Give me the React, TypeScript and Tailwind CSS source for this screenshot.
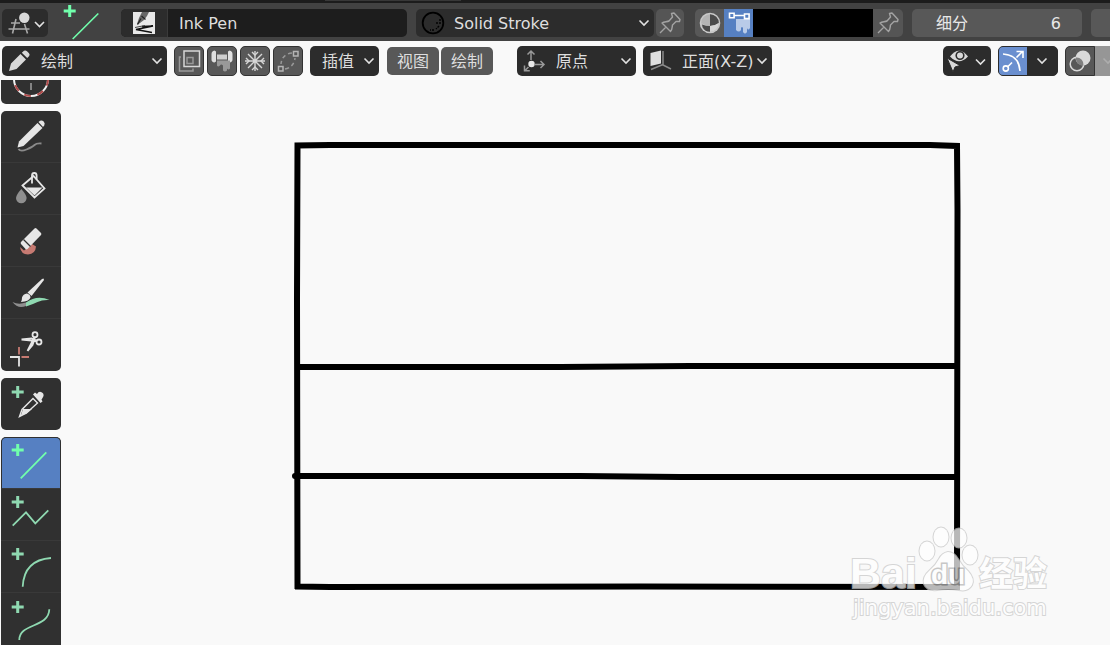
import type { ReactNode } from 'react';

const FONT = "font-['DejaVu_Sans','Noto_Sans_CJK_SC',sans-serif]";

function Chevron({ className = '' }: { className?: string }) {
  return (
    <svg
      className={`pointer-events-none shrink-0 ${className}`}
      width="12"
      height="8"
      viewBox="0 0 12 8"
      fill="none"
      stroke="#e2e2e2"
      strokeWidth="1.6"
    >
      <path d="M1.5 1.5 6 6l4.5-4.5" />
    </svg>
  );
}

function Plus() {
  return <path d="M16.7 7v12M10.7 13h12" strokeWidth="3" />;
}

function PinIcon() {
  return (
    <svg width="28" height="28" viewBox="0 0 28 28" fill="none" stroke="#a3a3a3" strokeWidth="1.4" strokeLinejoin="round">
      <path d="M4 24 10 18M6 14C8 12.500 11 13 13 12L16.500 8 15.500 4.500 18 4 24 10.500 23.500 12.500 20 12.500 16.500 16C16 18 16.500 20.500 14.500 22.500Z" />
    </svg>
  );
}

function Dropdown({
  label,
  value,
  icon,
  className,
}: {
  label: string;
  value: string;
  icon?: ReactNode;
  className: string;
}) {
  return (
    <div className="relative flex shrink-0 items-center">
      {icon && <span className="pointer-events-none absolute left-0">{icon}</span>}
      <select
        aria-label={label}
        defaultValue={value}
        className={`appearance-none rounded-[5px] bg-[#2c2c2c] pt-0.5 text-base text-[#dedede] outline-none ${className}`}
      >
        <option>{value}</option>
      </select>
      <Chevron className="absolute right-1" />
    </div>
  );
}

function IconButton({ label, className = '', children }: { label: string; className?: string; children: ReactNode }) {
  return (
    <button
      aria-label={label}
      className={`flex shrink-0 items-center justify-center overflow-hidden ${className}`}
    >
      {children}
    </button>
  );
}

const tile = 'h-[30px] w-[30px] rounded-[5px] border border-[#333] bg-[#585858]';

function ToolSettings() {
  return (
    <div className="flex h-[38px] items-center overflow-hidden bg-[#424242] pt-0.5 pl-0.5">
      <IconButton label="Snap" className="h-7 w-[46px] rounded-[5px] bg-[#2c2c2c]">
        <svg width="46" height="28" viewBox="0 0 46 28" fill="none" stroke="#a8a8a8" strokeWidth="1.6">
          <path d="M14 10 10.500 24.500M22.500 15 25.500 24.500M9 14h9M6.500 20h21" />
          <circle cx="22.300" cy="8.700" r="5.200" fill="#d9d9d9" stroke="none" />
          <path d="M33 13l4.500 4.500 4.500-4.500" stroke="#e2e2e2" />
        </svg>
      </IconButton>

      <svg className="ml-[10px] shrink-0" width="60" height="36" viewBox="0 1 60 36" fill="none" stroke="#71ffac">
        <path d="M11.700 1v12M5.700 7h12" strokeWidth="3" />
        <path d="M14.700 35 40.300 9.500" strokeWidth="1.600" />
      </svg>

      <div className="ml-[3px] flex h-7 shrink-0 overflow-hidden rounded-[5px] bg-[#1d1d1d]">
        <IconButton label="Brush preset" className="w-[47px] border-r border-[#3a3a3a] bg-[#2c2c2c]">
          <svg width="22" height="22" viewBox="0 0 22 22">
            <path d="M0 0h22v22H0z" fill="#e8e8e8" />
            <path d="M9 0h7l-2 4-3 4-6 4.500-1-.5 2-6z" fill="#666" />
            <path d="M4.500 12.500 8 6.500M8.500 4l4 3.500" stroke="#222" strokeWidth="1.200" />
            <path d="M9 14.500 20 14 3 17.500 19 20.500" fill="none" stroke="#111" strokeWidth="1.400" />
            <path d="M2 15.500 12 13.500" stroke="#444" />
          </svg>
        </IconButton>
        <input
          aria-label="Brush name"
          defaultValue="Ink Pen"
          className="w-[239px] bg-transparent pt-0.5 pl-[11px] text-base text-[#dedede] outline-none"
        />
      </div>

      <div className="ml-[9px] flex">
        <Dropdown
          label="Material"
          value="Solid Stroke"
          className="h-7 w-[238px] pl-[38px]"
          icon={
            <svg width="34" height="28" viewBox="0 0 34 28" fill="none" stroke="#000">
              <circle cx="17" cy="14" r="10.300" strokeWidth="1.800" />
              <path d="M24 10v5M23 17l-3 3M18 21h-4M21 13v3" strokeWidth="1.400" strokeDasharray="2 1" />
            </svg>
          }
        />
      </div>
      <IconButton label="Pin material" className="ml-0.5 h-7 w-7 rounded-[5px] bg-[#555]">
        <PinIcon />
      </IconButton>

      <div className="ml-[11px] flex h-7 shrink-0 overflow-hidden rounded-[5px]">
        <IconButton label="Material colour" className="w-[29px] bg-[#585858]">
          <svg width="28" height="28" viewBox="0 0 28 28">
            <circle cx="14" cy="14" r="10.300" fill="#c8c8c8" />
            <circle cx="14" cy="14" r="8.800" fill="#b4b4b4" />
            <path d="M14 14V5.200a8.800 8.800 0 0 1 8.800 8.800q-4 3-8.800 3z" fill="#4a4a4a" />
            <path d="M14 14v8.800A8.800 8.800 0 0 1 5.200 14q4 3 8.800 3z" fill="#c8c8c8" />
            <path d="M14 17v5.800q-5 0-7.500-4.500L6 15.500Q10 17 14 17z" fill="#4a4a4a" />
            <path d="M14 17v5.800a8.800 8.800 0 0 0 8.800-8.800q-4 3-8.800 3z" fill="#d4d4d4" />
          </svg>
        </IconButton>
        <IconButton label="Vertex colour" className="w-[29px] bg-[#5680c2]">
          <svg width="28" height="28" viewBox="0 0 28 28">
            <path d="M11 10h14v9q-2 3-3 0v4q-2 3-4 0v-4q-1-2-2 0v2q-2 3-5 0z" fill="#b9cbe8" />
            <path d="M9 6.500h10M4.500 4.200h4.600v4.600H4.500zM19.500 5h4.600v4.600h-4.600z" fill="#5680c2" stroke="#fff" strokeWidth="1.600" />
          </svg>
        </IconButton>
        <button aria-label="Stroke colour" className="w-[120px] bg-black" />
        <IconButton label="Pin colour" className="w-[30px] bg-[#555]">
          <PinIcon />
        </IconButton>
      </div>

      <label className="ml-[9px] flex h-7 w-[170px] shrink-0 items-center justify-between rounded-[5px] bg-[#585858] pt-0.5 pr-[21px] pl-6 text-base text-[#e8e8e8]">
        细分
        <input defaultValue="6" className="w-16 bg-transparent text-right outline-none" />
      </label>
      <div className="ml-[9px] h-7 min-w-2 flex-1 rounded-l-[5px] bg-[#585858]" />
    </div>
  );
}

function ViewportHeader() {
  return (
    <div className="flex h-[39px] items-center overflow-hidden pt-px pl-0.5">
      <Dropdown
        label="Mode"
        value="绘制"
        className="h-[30px] w-[165px] pl-[39px]"
        icon={
          <svg width="34" height="30" viewBox="0 0 34 30" fill="#d9d9d9">
            <path d="M7 25 9 17.500 18.500 8 24 13.500 14.500 23zM19.800 6.800 22 4.800q1.500-1 3 .5l2 2q1.300 1.500 0 3L25.200 12z" />
          </svg>
        }
      />
      <div className="ml-[7px] flex gap-[3px]">
        <IconButton label="Multiframe" className={tile}>
          <svg width="28" height="28" viewBox="0 0 28 28" fill="none" strokeWidth="1.500">
            <path d="M6 10H4.500v14H18v-2.500" stroke="#999" />
            <path d="M12 10.500h6v6h-6z" stroke="#999" />
            <path d="M9 4h15.500v15.500H9z" stroke="#d6d6d6" />
          </svg>
        </IconButton>
        <IconButton label="Draw on back" className={tile}>
          <svg width="28" height="28" viewBox="0 0 28 28">
            <path d="M3.500 7q0-3 3-3.500l1.500 1v10l-1.500 1q-3-.5-3-3zM24.500 7q0-3-3-3.500l-1.500 1v10l1.500 1q3-.5 3-3z" fill="#e0e0e0" />
            <path d="M9 7.500h10v5H9z" fill="#cfcfcf" />
            <path d="M9 13.500h13v8q-1.500 2-3 0v2q-2 2-4 0v-5q-2-2-3 0-2 2-3 0z" fill="#999" />
          </svg>
        </IconButton>
        <IconButton label="Additive drawing" className={tile}>
          <svg width="28" height="28" viewBox="0 0 28 28" fill="none" stroke="#d6d6d6" strokeWidth="1.400">
            <path d="M14 4v20M4 14h20M7 7l14 14M21 7 7 21" />
            <path d="m11 5 3 3 3-3M11 23l3-3 3 3M5 11l3 3-3 3M23 11l-3 3 3 3" />
          </svg>
        </IconButton>
        <IconButton label="Edit lines" className={tile}>
          <svg width="28" height="28" viewBox="0 0 28 28" fill="none" stroke="#999" strokeWidth="1.500">
            <path d="M18 6Q8 7 7 17M11 22Q20 20 21 11" strokeDasharray="4 3" />
            <path d="M19.500 4.500h4.500V9h-4.500zM4.500 19.500H9V24H4.500z" stroke="#b5b5b5" />
          </svg>
        </IconButton>
      </div>
      <div className="ml-[7px] flex">
        <Dropdown label="Interpolation" value="插值" className="h-[30px] w-[69px] pl-3" />
      </div>
      <div className="ml-2 flex shrink-0 gap-0.5 text-base text-[#dedede]">
        <button className="h-7 w-[52px] rounded-[5px] bg-[#585858] pt-0.5">视图</button>
        <button className="h-7 w-[52px] rounded-[5px] bg-[#585858] pt-0.5">绘制</button>
      </div>
      <div className="ml-6 flex gap-[7px]">
        <Dropdown
          label="Stroke placement"
          value="原点"
          className="h-[30px] w-[119px] pl-[39px]"
          icon={
            <svg width="34" height="30" viewBox="0 0 34 30" fill="none" stroke="#999" strokeWidth="1.500">
              <path d="M14 14V5.500m-3.500 3L14 5l3.500 3.500M18 18.500h9m-3.500-3.500 3.500 3.500-3.500 3.500M11.500 21 8 24.500M7.500 19.500v5.300h5.300" />
              <circle cx="14.500" cy="18" r="3.200" fill="#e8e8e8" stroke="none" />
            </svg>
          }
        />
        <Dropdown
          label="Drawing plane"
          value="正面(X-Z)"
          className="h-[30px] w-[129px] pl-[39px]"
          icon={
            <svg width="34" height="30" viewBox="0 0 34 30" fill="none">
              <path d="M20 5v14l8 4M20 18.500 8 23.500" stroke="#8a8a8a" strokeWidth="1.500" />
              <path d="M7.500 7 18 4.500v13L7.500 20z" fill="#e0e0e0" />
            </svg>
          }
        />
      </div>

      <div className="ml-auto flex shrink-0 gap-[7px]">
        <IconButton label="Visibility" className="h-[30px] w-12 rounded-[5px] bg-[#2c2c2c]">
          <svg width="48" height="30" viewBox="0 0 48 30" fill="none">
            <path d="M7 10.500Q16 -1 25 10.500 16 20 7 10.500z" fill="#d9d9d9" />
            <circle cx="17" cy="9.500" r="3.800" fill="#d9d9d9" stroke="#2c2c2c" strokeWidth="1.600" />
            <path d="M4 12 17 19.500l-5 1.500-2 5z" fill="#d9d9d9" stroke="#2c2c2c" strokeWidth="1" />
            <path d="m33 13.500 4.500 4.500 4.500-4.500" stroke="#e2e2e2" strokeWidth="1.600" />
          </svg>
        </IconButton>
        <div className="flex h-[30px] overflow-hidden rounded-[5px] border border-[#2c2c2c] bg-[#2c2c2c]">
          <IconButton label="Show gizmos" className="w-7 bg-[#6a8fcf]">
            <svg width="28" height="28" viewBox="0 0 28 28" fill="none" stroke="#fff" strokeWidth="1.600">
              <path d="M4 7q16 1 17 17M9 19.500 13 15.500M17.500 10.500 23.500 4.500M17.500 4.500H24V11" />
              <circle cx="6.800" cy="21.500" r="2.600" />
            </svg>
          </IconButton>
          <IconButton label="Gizmo options" className="w-[30px]">
            <Chevron />
          </IconButton>
        </div>
        <div className="flex h-[30px] overflow-hidden rounded-l-[5px] bg-[#969696]">
          <IconButton label="Show overlays" className="w-[30px] rounded-l-[5px] border border-[#333] bg-[#585858]">
            <svg width="28" height="28" viewBox="0 0 28 28" fill="none">
              <circle cx="17" cy="11" r="7.500" fill="#d9d9d9" />
              <circle cx="11" cy="17" r="6.800" stroke="#d9d9d9" strokeWidth="1.500" />
              <path d="M10 13a7.500 7.500 0 0 0 7.500 5.500A7 7 0 0 0 10 10.500z" fill="#585858" opacity=".7" />
            </svg>
          </IconButton>
          <IconButton label="Overlay options" className="w-[15px] justify-end opacity-30">
            <Chevron className="translate-x-1" />
          </IconButton>
        </div>
      </div>
    </div>
  );
}

function Tool({ label, active = false, children }: { label: string; active?: boolean; children: ReactNode }) {
  return (
    <button
      aria-label={label}
      aria-pressed={active}
      className={`block h-[52px] w-[60px] shrink-0 border-b border-[#393939] last:border-b-0 ${
        active ? 'rounded-t-[5px] border-x border-t border-x-[#303030] border-t-[#303030] bg-[#5680c2]' : ''
      }`}
    >
      <svg
        className={active ? '-mx-px -mt-px' : ''}
        width="60"
        height="51"
        viewBox="0 0 60 51"
        fill="none"
        stroke={active ? '#71ffac' : '#8fd9b1'}
        strokeWidth="1.800"
      >
        {children}
      </svg>
    </button>
  );
}

function Toolbar() {
  const group = 'flex w-[60px] shrink-0 flex-col overflow-hidden bg-[#303030]';
  return (
    <aside className="flex w-[62px] shrink-0 flex-col gap-[7px] overflow-hidden pl-px">
      <div className={`${group} h-6 justify-end rounded-b-[5px]`}>
        <Tool label="Cursor">
          <circle cx="30" cy="26" r="17" stroke="#f2f2f2" strokeWidth="2" />
          <circle cx="30" cy="26" r="17" stroke="#b04a4a" strokeWidth="2" strokeDasharray="6.700 6.650" />
          <path d="M30 30v7" stroke="#a0a0a0" strokeWidth="1.500" />
        </Tool>
      </div>

      <div className={`${group} rounded-[5px]`}>
        <Tool label="Draw">
          <path d="M17.500 38q2 3 8 .5t8-4.500 7-1.500" stroke="#8a8a8a" />
          <path d="M16.500 36.500 18 30.500 36.500 12l5 5L22.500 35z" fill="#e6e6e6" stroke="none" />
          <path d="m37.500 11 1.500-1.200q2-1 3.700.8t.5 3.900L42 16z" fill="#e6e6e6" stroke="none" />
        </Tool>
        <Tool label="Fill">
          <path d="m21.500 22.500 11-9.500 11 12.500-10 9z" stroke="#e6e6e6" />
          <path d="M25 24.500h16.500l-8 8z" fill="#e6e6e6" stroke="none" />
          <path d="M31 20.500V12.500q0-2.500 2.300-2.500t2.300 2.500v4" stroke="#e6e6e6" />
          <path d="M20.300 26q5.300 6 5.300 9a5.300 5.300 0 0 1-10.600 0q0-3 5.300-9z" fill="#8f8f8f" stroke="none" />
        </Tool>
        <Tool label="Erase">
          <path d="M19 32q1 7.500 8 7.500 7.500-.5 8-8l-4-2.500-8 6.500z" fill="#c67a72" stroke="none" />
          <path d="M33.500 13.500q1-1 2 0l4.500 4.500q.8 1 0 2L26.500 34q-1 .8-2 0L20 29q-.8-1 0-2z" fill="#e6e6e6" stroke="none" />
          <path d="m22.500 24.500 7 7" stroke="#303030" strokeWidth="1.300" />
        </Tool>
        <Tool label="Tint">
          <path d="M11.500 35q6 3 13.500.5V39q-8 3.500-13.500-4z" fill="#8f8f8f" stroke="none" />
          <path d="M25 35.500q11-8 23.500-2.500-7-.5-12 2T25 39.500z" fill="#8fd9b1" stroke="none" />
          <path d="m41 12 1.500-.5.500 1.500-12.500 16-4-3.500z" fill="#e6e6e6" stroke="none" />
          <path d="M26 26.500q3.500 1 3.500 4-1.500 4-9.500 4.500 1-1.500 1-4.500 1-3.500 5-4z" fill="#e6e6e6" stroke="none" />
        </Tool>
        <Tool label="Cutter">
          <g stroke="#e6e6e6">
            <circle cx="34" cy="14.700" r="2.500" />
            <circle cx="38" cy="22" r="2.500" />
            <path d="m20.500 19.500 15 1.500M20.500 19.500l10-1 5 2M26.500 31l7-14M26.500 31l5-6 2.500-7" />
            <path d="M9 37h9v9.500" />
          </g>
          <path d="M18 27v7.500M20.500 37H28" stroke="#c67a72" />
        </Tool>
      </div>

      <div className={`${group} rounded-[5px]`}>
        <Tool label="Eyedropper">
          <Plus />
          <path d="m18.500 37.500 2.500-7 11-11 4.500 4.500-11 10z" stroke="#e6e6e6" strokeWidth="1.400" />
          <path d="m22 30 9 0-6 5-5 1z" fill="#e6e6e6" stroke="none" />
          <path d="m32 15.500 2-2 2 1.500q2-3.500 5-1.500t.5 5.500l-1 1.500 1 2-2 1.500z" fill="#e6e6e6" stroke="none" />
        </Tool>
      </div>

      <div className={`${group} rounded-t-[5px]`}>
        <Tool label="Line" active>
          <Plus />
          <path d="M19.700 41.300 45.300 15.300" />
        </Tool>
        <Tool label="Polyline">
          <Plus />
          <path d="M11.700 36.700 25 23.300l9.300 11 13-13" />
        </Tool>
        <Tool label="Arc">
          <Plus />
          <path d="M21.700 45.700Q23 19 50 17" />
        </Tool>
        <Tool label="Curve">
          <Plus />
          <path d="M18.300 46C18 29 48 34 48.300 15.300" />
        </Tool>
      </div>
    </aside>
  );
}

function Canvas() {
  return (
    <main className="min-w-0 flex-1 overflow-hidden">
      <svg className="block" width="1048" height="565" viewBox="62 80 1048 565">
        <g fill="none" stroke="#000" strokeWidth="6" strokeLinejoin="miter">
          <path d="M297.500 589 297 300 297.500 145.500 330 145 930 145 957 146 957.500 210 957 587 640 586.500 330 587 295 586.500" />
          <path d="M297 367 560 367 690 366 957 366" />
          <path d="M295 476 580 476 680 477 957 477" strokeLinecap="round" />
        </g>

        <g fill="#fff" stroke="#c8c8c8" strokeWidth="2" paintOrder="stroke" opacity="0.720">
          <ellipse cx="927" cy="551" rx="7.500" ry="9.500" />
          <ellipse cx="941" cy="537" rx="7.500" ry="9.500" />
          <ellipse cx="959" cy="538" rx="7.500" ry="9.500" />
          <ellipse cx="970" cy="555" rx="7.500" ry="9.500" />
          <path d="M948 552q6 0 10 7t10 12q7 8 4 14-4 7-13 5-11-2-22 0-10 1-13-6-2-7 6-14 6-5 9-11t9-7z" />
          <g className="font-['Liberation_Sans','Noto_Sans_CJK_SC',sans-serif] font-bold">
            <text x="850" y="588" fontSize="43">Bai</text>
            <text x="931" y="584" fontSize="28" stroke="#b4b4b4" strokeWidth="3">du</text>
            <text x="979" y="586" fontSize="34">经验</text>
          </g>
          <text className="font-['DejaVu_Sans',sans-serif]" x="853" y="615" fontSize="21">
            jingyan.baidu.com
          </text>
        </g>
      </svg>
    </main>
  );
}

export default function App() {
  return (
    <div className={`flex h-screen flex-col overflow-hidden bg-[#f9f9f9] ${FONT}`}>
      <header className="shrink-0">
        <div className="h-[3px] bg-[#1c1c1c]">
          <div className="ml-[325px] h-px w-[136px] bg-[#383838]" />
        </div>
        <ToolSettings />
        <ViewportHeader />
      </header>
      <div className="flex min-h-0 flex-1">
        <Toolbar />
        <Canvas />
      </div>
    </div>
  );
}
